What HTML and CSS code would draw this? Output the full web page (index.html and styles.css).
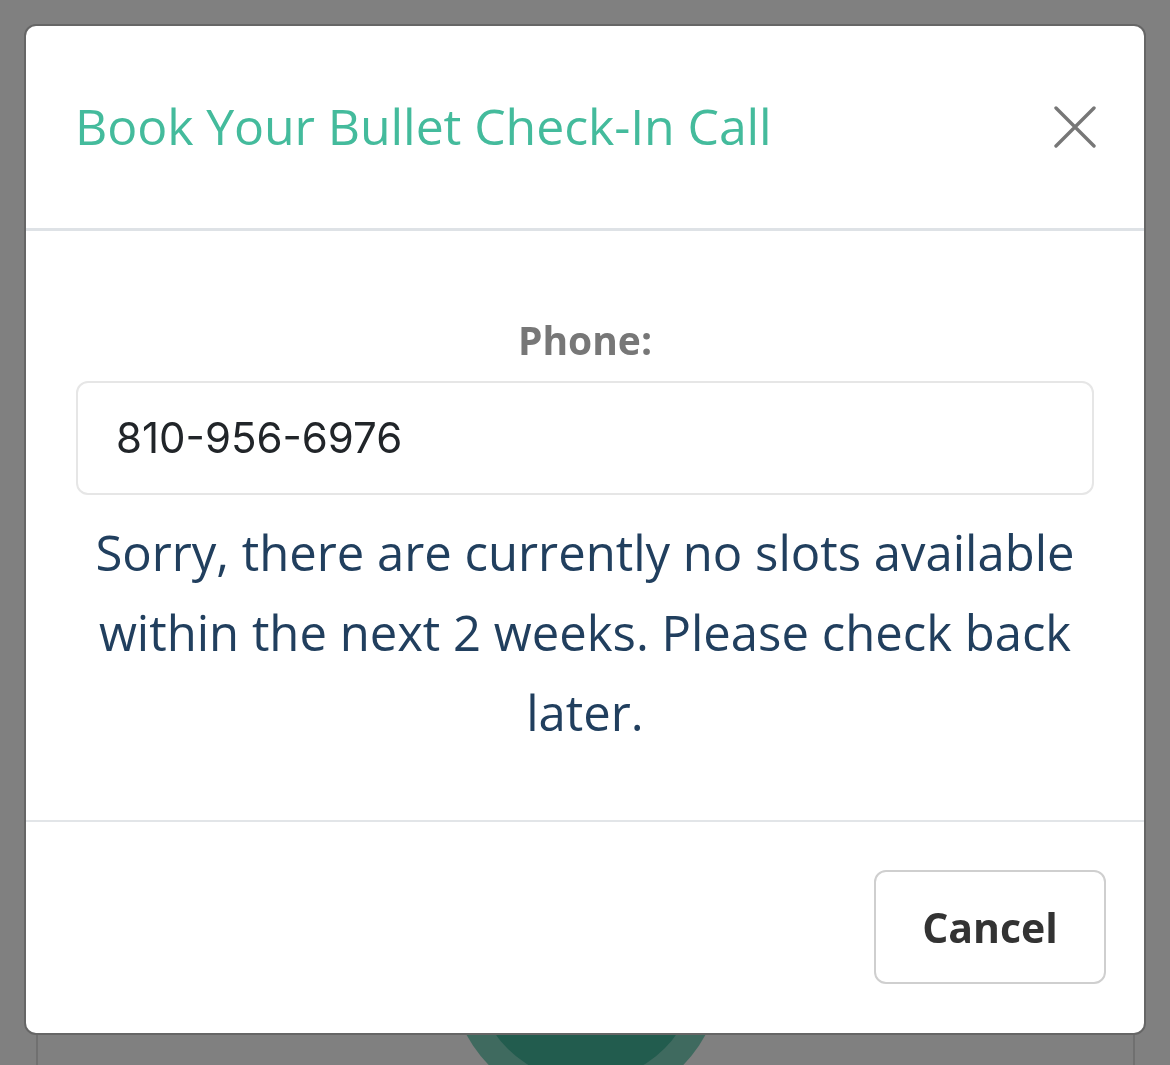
FILE: index.html
```html
<!DOCTYPE html>
<html lang="en">
<head>
<meta charset="utf-8">
<title>Book Your Bullet Check-In Call</title>
<link rel="stylesheet" href="styles.css">
</head>
<body>
<div class="page">
  <div class="bg-top-card"></div>
  <div class="bg-card">
    <div class="bg-button"><div class="bg-button-core"></div></div>
  </div>
</div>

<div class="modal" role="dialog" aria-labelledby="modal-title">
  <div class="modal-header">
    <h2 class="modal-title" id="modal-title">Book Your Bullet Check-In Call</h2>
    <button class="close-btn" aria-label="Close">
      <svg width="42" height="42" viewBox="0 0 42 42"><path d="M2 2 L40 40 M40 2 L2 40" stroke="#777" stroke-width="3.4" stroke-linecap="round" fill="none"/></svg>
    </button>
  </div>
  <div class="modal-body">
    <label class="field-label" for="phone">Phone:</label>
    <div class="field-input" id="phone">810-956-6976</div>
    <p class="message">Sorry, there are currently no slots available within the next 2 weeks. Please check back later.</p>
  </div>
  <div class="modal-footer">
    <button class="cancel-btn">Cancel</button>
  </div>
</div>
</body>
</html>
```

FILE: styles.css
```css
html, body {
  margin: 0;
  padding: 0;
}
body {
  width: 1170px;
  height: 1065px;
  overflow: hidden;
  background: #808080;
  font-family: "Open Sans", "Liberation Sans", sans-serif;
}
.page {
  height: 1065px;
  display: flex;
  flex-direction: column;
}
.bg-top-card {
  height: 3px;
  margin: 0 32px 0 51px;
  background: #6e6e6e;
  border-radius: 0 0 8px 8px;
}
.bg-card {
  margin: 834px 35px 0 36px;
  flex: 1;
  border-left: 2px solid #707070;
  border-right: 2px solid #707070;
  display: flex;
  justify-content: center;
}
.bg-button {
  width: 272px;
  height: 272px;
  border-radius: 50%;
  background: #3f6a5f;
  display: flex;
  align-items: center;
  justify-content: center;
  flex-shrink: 0;
}
.bg-button-core {
  width: 222px;
  height: 222px;
  border-radius: 50%;
  background: #225c4e;
}

.modal {
  position: fixed;
  top: 24px;
  left: 24px;
  width: 1118px;
  height: 1007px;
  background: #fff;
  border: 2px solid #666;
  border-radius: 12px;
  display: flex;
  flex-direction: column;
  overflow: hidden;
}
.modal-header {
  height: 202px;
  border-bottom: 3px solid #dee2e6;
  display: flex;
  align-items: center;
  justify-content: space-between;
  padding: 0 48px 0 49px;
  flex-shrink: 0;
}
.modal-title {
  margin: -3px 0 0;
  font-weight: 400;
  font-size: 50px;
  color: #44bb9c;
  letter-spacing: -0.1px;
}
.close-btn {
  border: 0;
  background: none;
  padding: 0;
  width: 42px;
  height: 42px;
  display: flex;
}
.modal-body {
  height: 589px;
  border-bottom: 2px solid #e2e5e8;
  padding: 0 50px;
  display: flex;
  flex-direction: column;
  align-items: stretch;
  flex-shrink: 0;
}
.field-label {
  margin-top: 79px;
  text-align: center;
  font-weight: 700;
  font-size: 39px;
  line-height: 60px;
  color: #777;
}
.field-input {
  margin-top: 11px;
  border: 2px solid #e6e6e6;
  border-radius: 12px;
  padding: 0 0 2px 38px;
  box-sizing: border-box;
  height: 114px;
  display: flex;
  align-items: center;
  font-family: Inter, "Liberation Sans", sans-serif;
  font-size: 42px;
  color: #212529;
}
.message {
  margin: 17px 0 0;
  text-align: center;
  font-size: 49px;
  line-height: 80px;
  color: #213f5e;
}
.modal-footer {
  flex: 1;
  display: flex;
  justify-content: flex-end;
  align-items: flex-start;
  padding: 48px 38px 0 0;
}
.cancel-btn {
  width: 232px;
  height: 114px;
  background: #fff;
  border: 2px solid #cfcfcf;
  border-radius: 12px;
  font-family: "Open Sans", "Liberation Sans", sans-serif;
  font-weight: 700;
  font-size: 41px;
  color: #333;
}
```
